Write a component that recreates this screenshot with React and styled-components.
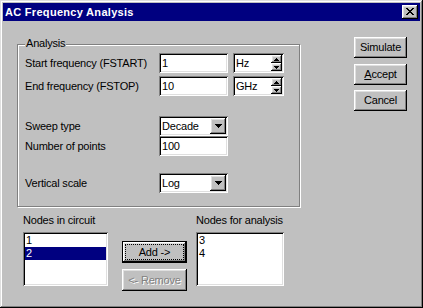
import React from 'react';
import styled, { createGlobalStyle } from 'styled-components';

const FONT = `"Liberation Sans", Arial, sans-serif`;

const Global = createGlobalStyle`
  html, body { margin: 0; padding: 0; background: #c0c0c0; overflow: hidden; }
  * { box-sizing: border-box; }
`;

const raised = `inset -1px -1px 0 #000, inset 1px 1px 0 #fff, inset -2px -2px 0 #808080, inset 2px 2px 0 #dfdfdf`;
const sunken = `inset 1px 1px 0 #808080, inset -1px -1px 0 #fff, inset 2px 2px 0 #000, inset -2px -2px 0 #dfdfdf`;

const Window = styled.div`
  width: 423px;
  height: 308px;
  padding: 3px;
  background: #c0c0c0;
  box-shadow: inset -1px -1px 0 #000, inset 1px 1px 0 #dfdfdf, inset -2px -2px 0 #808080, inset 2px 2px 0 #fff;
  display: flex;
  flex-direction: column;
  font-family: ${FONT};
  font-size: 11px;
  letter-spacing: -0.2px;
  color: #000;
`;

const TitleBar = styled.div`
  height: 18px;
  background: #000080;
  display: flex;
  align-items: center;
  justify-content: space-between;
  padding: 0 2px 0 2px;
`;

const Title = styled.span`
  color: #fff;
  font-weight: bold;
  font-size: 11px;
  line-height: 13px;
  letter-spacing: 0.3px;
`;

const CloseButton = styled.div`
  width: 16px;
  height: 14px;
  background: #c0c0c0;
  box-shadow: ${raised};
  display: flex;
  align-items: center;
  justify-content: center;
  padding-right: 1px;
  padding-bottom: 1px;
`;

const Content = styled.div`
  flex: 1;
  display: flex;
  padding-left: 14px;
`;

const LeftCol = styled.div`
  display: flex;
  flex-direction: column;
  padding-top: 23px;
  width: 284px;
`;

const RightCol = styled.div`
  display: flex;
  flex-direction: column;
  padding-top: 16px;
  margin-left: 53px;
`;

const Group = styled.div`
  position: relative;
  width: 283px;
  height: 163px;
  border: 1px solid #808080;
  box-shadow: 1px 1px 0 #fff, inset 1px 1px 0 #fff;
  padding: 8px 0 0 7px;
`;

const Legend = styled.span`
  position: absolute;
  top: -8px;
  left: 7px;
  padding: 0 1px;
  line-height: 13px;
  background: #c0c0c0;
`;

const Row = styled.div`
  display: flex;
  align-items: center;
  height: 20px;
  margin-top: ${(p) => p.$gap || 0}px;
`;

const Label = styled.span`
  width: 134px;
  line-height: 13px;
  white-space: nowrap;
`;

const Field = styled.div`
  width: ${(p) => p.$w}px;
  height: 20px;
  margin-left: ${(p) => p.$ml || 0}px;
  background: #fff;
  box-shadow: ${sunken};
  display: flex;
  align-items: center;
  padding: 2px 2px 2px 3px;
  line-height: 13px;
`;

const FieldText = styled.span`
  flex: 1;
`;

const Spinner = styled.div`
  width: 11px;
  height: 16px;
  display: flex;
  flex-direction: column;
`;

const SpinHalf = styled.div`
  height: 8px;
  background: #c0c0c0;
  box-shadow: ${raised};
  display: flex;
  align-items: center;
  justify-content: center;
`;

const DropButton = styled.div`
  width: 16px;
  height: 16px;
  background: #c0c0c0;
  box-shadow: ${raised};
  display: flex;
  align-items: center;
  justify-content: center;
`;

const PushButton = styled.div`
  width: ${(p) => p.$w || 53}px;
  height: ${(p) => p.$h || 21}px;
  margin-top: ${(p) => p.$gap || 0}px;
  background: #c0c0c0;
  box-shadow: ${raised};
  display: flex;
  align-items: center;
  justify-content: center;
  line-height: 13px;
  color: ${(p) => (p.$disabled ? '#808080' : '#000')};
  text-shadow: ${(p) => (p.$disabled ? '1px 1px 0 #fff' : 'none')};
`;

const DefaultButton = styled(PushButton)`
  border: 1px solid #000;
  padding: 2px;
`;

const FocusRing = styled.span`
  flex: 1;
  align-self: stretch;
  border: 1px dotted #000;
  display: flex;
  align-items: center;
  justify-content: center;
`;

const NodesRow = styled.div`
  display: flex;
  margin-top: 7px;
  margin-left: 6px;
`;

const NodesCol = styled.div`
  display: flex;
  flex-direction: column;
  margin-left: ${(p) => p.$ml || 0}px;
  padding-top: ${(p) => p.$pt || 0}px;
`;

const SmallLabel = styled.span`
  line-height: 13px;
  margin-bottom: 5px;
  white-space: nowrap;
`;

const ListBox = styled.div`
  width: ${(p) => p.$w}px;
  height: 54px;
  background: #fff;
  box-shadow: ${sunken};
  padding: 2px;
`;

const ListItem = styled.div`
  height: 13px;
  line-height: 13px;
  padding-left: 1px;
  background: ${(p) => (p.$selected ? '#000080' : 'transparent')};
  color: ${(p) => (p.$selected ? '#fff' : '#000')};
`;

const Pixels = ({ w, h, rects }) => (
  <svg width={w} height={h} viewBox={`0 0 ${w} ${h}`} shapeRendering="crispEdges" style={{ display: 'block' }}>
    {rects.map(([x, y, rw, rh], i) => (
      <rect key={i} x={x} y={y} width={rw} height={rh} fill="#000" />
    ))}
  </svg>
);

const CloseGlyph = () => (
  <Pixels
    w={8}
    h={7}
    rects={[
      [0, 0, 2, 1], [6, 0, 2, 1],
      [1, 1, 2, 1], [5, 1, 2, 1],
      [2, 2, 4, 1],
      [3, 3, 2, 1],
      [2, 4, 4, 1],
      [1, 5, 2, 1], [5, 5, 2, 1],
      [0, 6, 2, 1], [6, 6, 2, 1],
    ]}
  />
);

const DownArrow = () => (
  <Pixels w={7} h={4} rects={[[0, 0, 7, 1], [1, 1, 5, 1], [2, 2, 3, 1], [3, 3, 1, 1]]} />
);

const SpinUp = () => <Pixels w={5} h={3} rects={[[2, 0, 1, 1], [1, 1, 3, 1], [0, 2, 5, 1]]} />;
const SpinDown = () => <Pixels w={5} h={3} rects={[[0, 0, 5, 1], [1, 1, 3, 1], [2, 2, 1, 1]]} />;

const UnitSpin = ({ value }) => (
  <Field $w={51} $ml={5}>
    <FieldText>{value}</FieldText>
    <Spinner>
      <SpinHalf><SpinUp /></SpinHalf>
      <SpinHalf><SpinDown /></SpinHalf>
    </Spinner>
  </Field>
);

const Combo = ({ value }) => (
  <Field $w={69}>
    <FieldText>{value}</FieldText>
    <DropButton><DownArrow /></DropButton>
  </Field>
);

export default function App() {
  return (
    <>
      <Global />
      <Window>
        <TitleBar>
          <Title>AC Frequency Analysis</Title>
          <CloseButton><CloseGlyph /></CloseButton>
        </TitleBar>
        <Content>
          <LeftCol>
            <Group>
              <Legend>Analysis</Legend>
              <Row>
                <Label>Start frequency (FSTART)</Label>
                <Field $w={69}><FieldText>1</FieldText></Field>
                <UnitSpin value="Hz" />
              </Row>
              <Row $gap={3}>
                <Label>End frequency (FSTOP)</Label>
                <Field $w={69}><FieldText>10</FieldText></Field>
                <UnitSpin value="GHz" />
              </Row>
              <Row $gap={20}>
                <Label>Sweep type</Label>
                <Combo value="Decade" />
              </Row>
              <Row>
                <Label>Number of points</Label>
                <Field $w={69}><FieldText>100</FieldText></Field>
              </Row>
              <Row $gap={17}>
                <Label>Vertical scale</Label>
                <Combo value="Log" />
              </Row>
            </Group>
            <NodesRow>
              <NodesCol>
                <SmallLabel>Nodes in circuit</SmallLabel>
                <ListBox $w={85}>
                  <ListItem>1</ListItem>
                  <ListItem $selected>2</ListItem>
                </ListBox>
              </NodesCol>
              <NodesCol $ml={14} $pt={27}>
                <DefaultButton $w={65} $h={22}>
                  <FocusRing>Add -&gt;</FocusRing>
                </DefaultButton>
                <PushButton $w={65} $h={22} $gap={6} $disabled>&lt;- Remove</PushButton>
              </NodesCol>
              <NodesCol $ml={9}>
                <SmallLabel>Nodes for analysis</SmallLabel>
                <ListBox $w={88}>
                  <ListItem>3</ListItem>
                  <ListItem>4</ListItem>
                </ListBox>
              </NodesCol>
            </NodesRow>
          </LeftCol>
          <RightCol>
            <PushButton>Simulate</PushButton>
            <PushButton $gap={6}><span><u>A</u>ccept</span></PushButton>
            <PushButton $gap={5}>Cancel</PushButton>
          </RightCol>
        </Content>
      </Window>
    </>
  );
}
